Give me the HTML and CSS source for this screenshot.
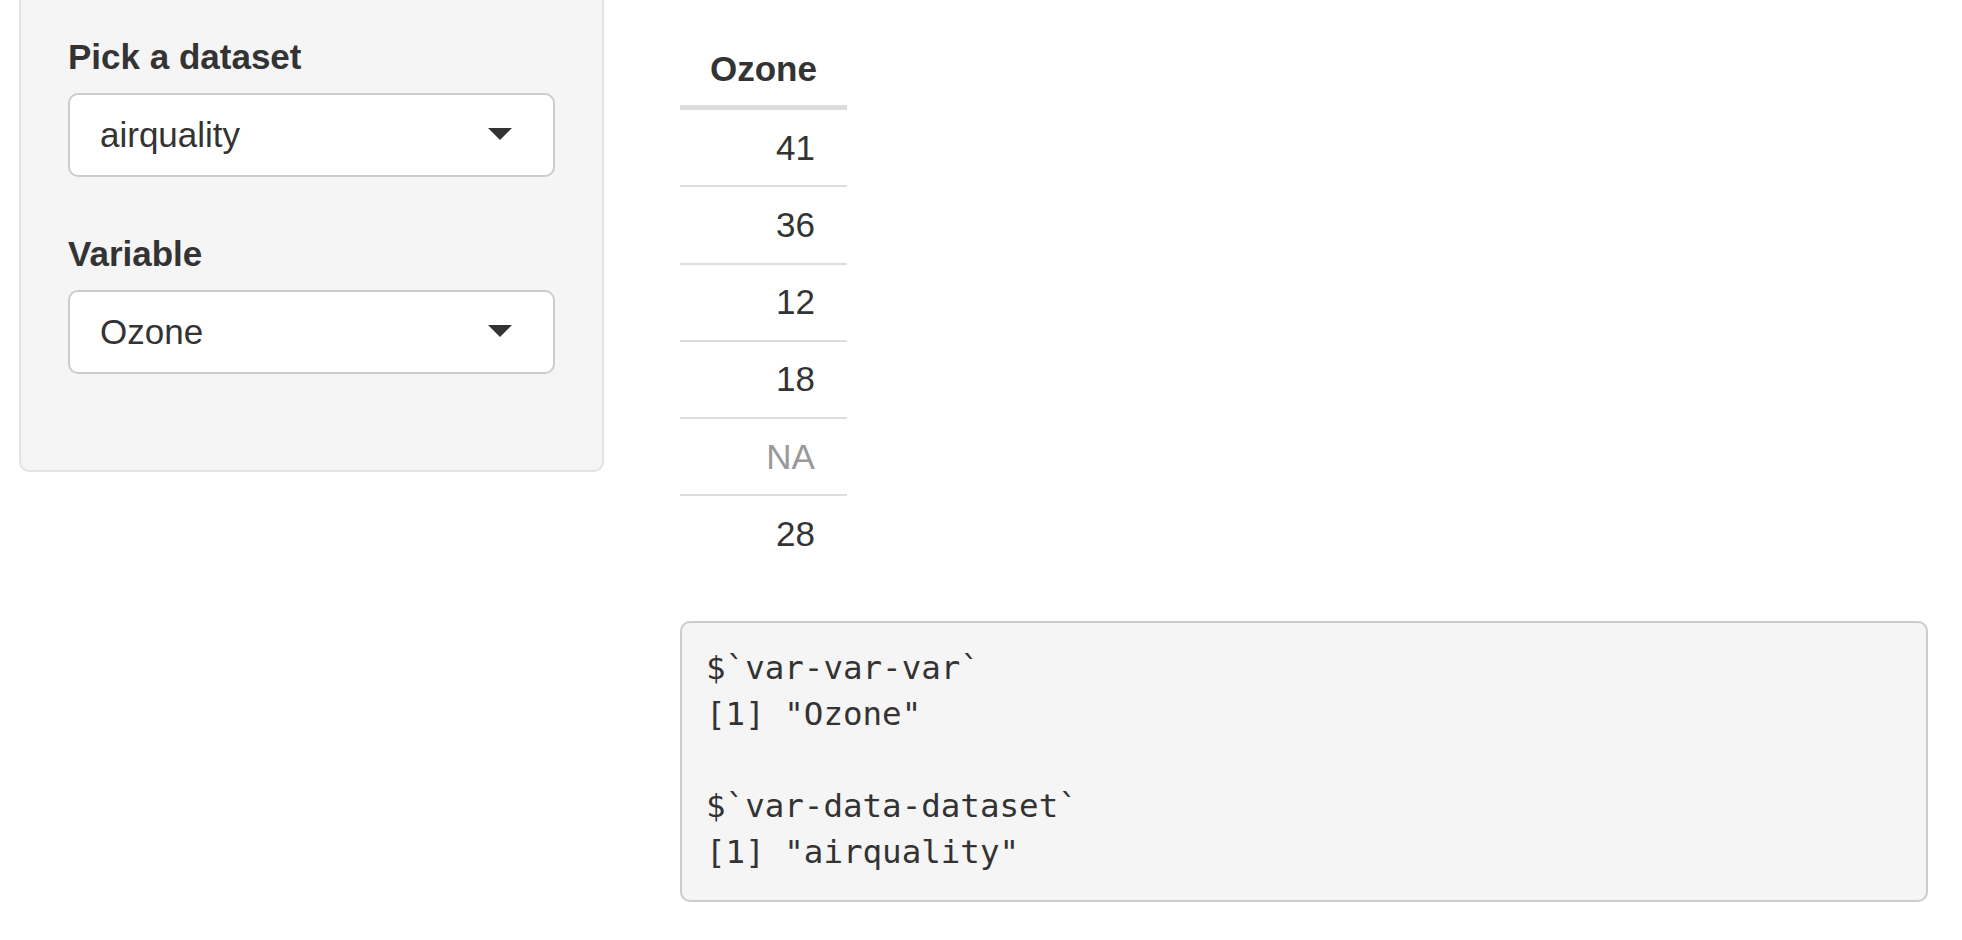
FILE: index.html
```html
<!DOCTYPE html>
<html>
<head>
<meta charset="utf-8">
<link rel="stylesheet" href="styles.css">
</head>
<body>
<div class="page">
  <aside class="well">
    <div class="form-group">
      <label class="control-label">Pick a dataset</label>
      <div class="select">
        <span class="select-value">airquality</span>
        <span class="caret"></span>
      </div>
    </div>
    <div class="form-group last">
      <label class="control-label">Variable</label>
      <div class="select">
        <span class="select-value">Ozone</span>
        <span class="caret"></span>
      </div>
    </div>
  </aside>
  <main class="main">
    <table class="data-table">
      <thead>
        <tr><th>Ozone</th></tr>
      </thead>
      <tbody>
        <tr><td>41</td></tr>
        <tr><td>36</td></tr>
        <tr><td>12</td></tr>
        <tr><td>18</td></tr>
        <tr><td class="na">NA</td></tr>
        <tr><td>28</td></tr>
      </tbody>
    </table>
    <pre class="output">$`var-var-var`
[1] "Ozone"

$`var-data-dataset`
[1] "airquality"</pre>
  </main>
</div>
</body>
</html>
```

FILE: styles.css
```css
html, body {
  margin: 0;
  padding: 0;
  background: #ffffff;
  overflow: hidden;
}

body {
  font-family: "Liberation Sans", Arial, sans-serif;
  font-size: 35px;
  line-height: 50px;
  color: #333333;
  width: 1962px;
  height: 940px;
}

.page {
  display: flex;
  align-items: flex-start;
  padding-left: 19px;
}

.well {
  box-sizing: border-box;
  width: 585px;
  flex: 0 0 585px;
  margin-top: -18px;
  padding: 47.5px 47px 96px 47px;
  background: #f5f5f5;
  border: 2px solid #e3e3e3;
  border-radius: 10px;
}

.form-group {
  margin-bottom: 52px;
}

.form-group.last {
  margin-bottom: 0;
}

.control-label {
  display: block;
  font-weight: bold;
  margin-bottom: 11px;
}

.select {
  box-sizing: border-box;
  height: 84px;
  display: flex;
  align-items: center;
  justify-content: space-between;
  padding: 15px 41px 15px 30px;
  background: #ffffff;
  border: 2px solid #cccccc;
  border-radius: 10px;
}

.select-value {
  line-height: 50px;
}

.caret {
  width: 0;
  height: 0;
  margin-top: -1px;
  border-left: 12.5px solid transparent;
  border-right: 12.5px solid transparent;
  border-top: 12.5px solid #333333;
}

.main {
  margin-left: 76px;
  width: 1248px;
  flex: 0 0 1248px;
  padding-top: 32px;
}

.data-table {
  border-collapse: collapse;
  border-spacing: 0;
  margin-bottom: 49px;
}

.data-table th {
  font-weight: bold;
  text-align: right;
  padding: 12px 30px 11px 30px;
  line-height: 50px;
  border-bottom: 5px solid #dddddd;
}

.data-table td {
  text-align: right;
  padding: 12.5px 32px 12.75px 30px;
  line-height: 50px;
  border-top: 2px solid #dddddd;
}

.data-table tbody tr:first-child td {
  border-top: 0;
}

.data-table td.na {
  color: #999999;
}

.output {
  box-sizing: border-box;
  margin: 0;
  width: 1248px;
  padding: 22.75px 24px 24.75px 24px;
  background: #f5f5f5;
  border: 2px solid #cccccc;
  border-radius: 10px;
  font-family: "DejaVu Sans Mono", Menlo, monospace;
  font-size: 32.5px;
  line-height: 46px;
  color: #333333;
  white-space: pre;
}
```
